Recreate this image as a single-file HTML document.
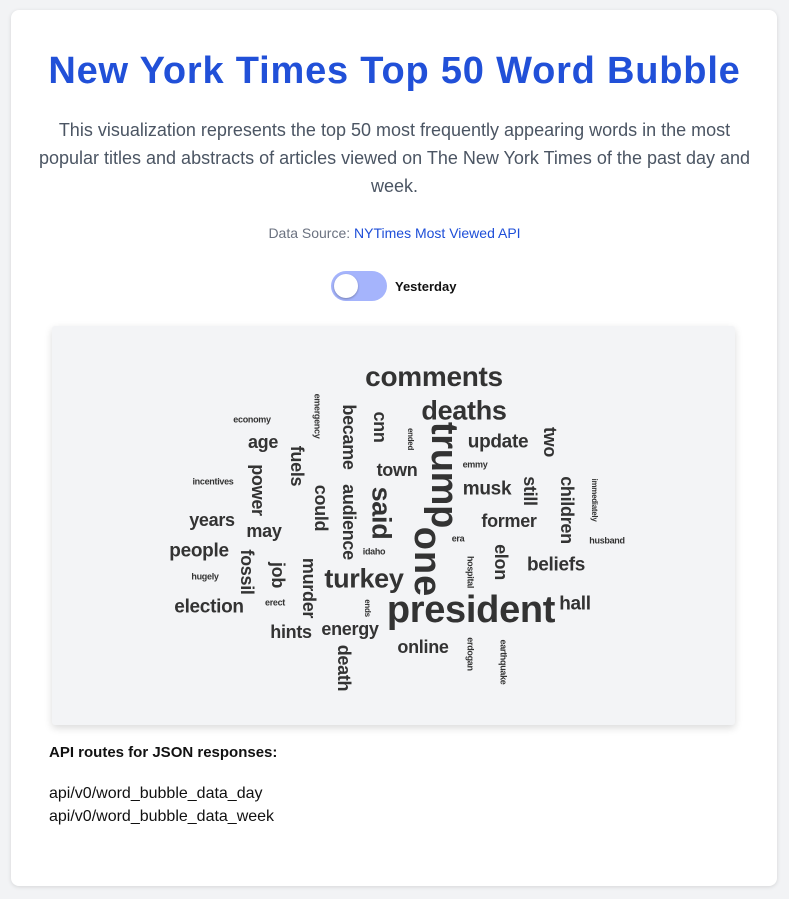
<!DOCTYPE html>
<html><head><meta charset="utf-8"><style>
body{margin:0;background:#f2f3f5;font-family:"Liberation Sans",sans-serif;width:789px;height:899px;overflow:hidden}
.card{position:absolute;left:11px;top:10px;width:766px;height:876px;background:#fff;border-radius:8px;box-shadow:0 1px 4px rgba(0,0,0,.12)}
h1{position:absolute;left:0;width:789px;top:50px;margin:0;text-align:center;color:#2150d8;font-size:38px;font-weight:900;letter-spacing:0.8px}
.desc{position:absolute;left:34px;width:721px;top:116px;text-align:center;color:#4b5563;font-size:18px;line-height:28px}
.src{position:absolute;left:0;width:789px;top:225px;text-align:center;color:#6b7280;font-size:14px}
.src a{color:#1d4ed8;text-decoration:none}
.tog{position:absolute;left:331px;top:271px;width:56px;height:30px;border-radius:15px;background:#a5b4fc}
.tog:after{content:"";position:absolute;left:3px;top:3px;width:24px;height:24px;border-radius:50%;background:#fff;box-shadow:0 1px 2px rgba(0,0,0,.3)}
.tl{position:absolute;left:395px;top:279px;font-size:13px;font-weight:bold;color:#111}
.cloud{position:absolute;left:52px;top:326px;width:683px;height:399px;background:#f3f4f6;box-shadow:0 3px 8px rgba(0,0,0,.15);border-radius:3px}
.w{position:absolute;transform:translate(-50%,-50%);font-weight:bold;color:#333;white-space:nowrap;line-height:1;letter-spacing:-0.3px}
.v{transform:translate(-50%,-50%) rotate(90deg)}
.api{position:absolute;left:49px;font-size:16px;color:#111}
</style></head><body>
<div class="card"></div>
<h1>New York Times Top 50 Word Bubble</h1>
<div class="desc">This visualization represents the top 50 most frequently appearing words in the most popular titles and abstracts of articles viewed on The New York Times of the past day and week.</div>
<div class="src">Data Source: <a>NYTimes Most Viewed API</a></div>
<div class="tog"></div><div class="tl">Yesterday</div>
<div class="cloud"></div>
<div style="position:absolute;left:0;top:0">
<div class="w" style="left:434px;top:377px;font-size:28px">comments</div>
<div class="w" style="left:464px;top:411px;font-size:27px">deaths</div>
<div class="w" style="left:498px;top:442px;font-size:19px">update</div>
<div class="w" style="left:397px;top:470px;font-size:18px">town</div>
<div class="w" style="left:475px;top:465px;font-size:9px">emmy</div>
<div class="w" style="left:487px;top:489px;font-size:19px">musk</div>
<div class="w" style="left:509px;top:521px;font-size:18px">former</div>
<div class="w" style="left:252px;top:420px;font-size:9px">economy</div>
<div class="w" style="left:263px;top:442px;font-size:18px">age</div>
<div class="w" style="left:213px;top:482px;font-size:9px">incentives</div>
<div class="w" style="left:212px;top:520px;font-size:18px">years</div>
<div class="w" style="left:264px;top:531px;font-size:18px">may</div>
<div class="w" style="left:199px;top:551px;font-size:19px">people</div>
<div class="w" style="left:374px;top:552px;font-size:9px">idaho</div>
<div class="w" style="left:458px;top:539px;font-size:9px">era</div>
<div class="w" style="left:607px;top:541px;font-size:9px">husband</div>
<div class="w" style="left:556px;top:565px;font-size:19px">beliefs</div>
<div class="w" style="left:205px;top:577px;font-size:9px">hugely</div>
<div class="w" style="left:364px;top:579px;font-size:27px">turkey</div>
<div class="w" style="left:275px;top:603px;font-size:9px">erect</div>
<div class="w" style="left:209px;top:607px;font-size:19px">election</div>
<div class="w" style="left:471px;top:610px;font-size:38px">president</div>
<div class="w" style="left:575px;top:604px;font-size:19px">hall</div>
<div class="w" style="left:291px;top:632px;font-size:18px">hints</div>
<div class="w" style="left:350px;top:629px;font-size:18px">energy</div>
<div class="w" style="left:423px;top:647px;font-size:18px">online</div>

<div class="w v" style="left:317px;top:416px;font-size:9px">emergency</div>
<div class="w v" style="left:349px;top:437px;font-size:18px">became</div>
<div class="w v" style="left:349px;top:522px;font-size:18px">audience</div>
<div class="w v" style="left:380px;top:427px;font-size:18px">cnn</div>
<div class="w v" style="left:410px;top:439px;font-size:8px">ended</div>
<div class="w v" style="left:444px;top:475px;font-size:38px">trump</div>
<div class="w v" style="left:427px;top:562px;font-size:38px;letter-spacing:1px">one</div>
<div class="w v" style="left:550px;top:442px;font-size:18px">two</div>
<div class="w v" style="left:297px;top:466px;font-size:18px">fuels</div>
<div class="w v" style="left:258px;top:490px;font-size:18px">power</div>
<div class="w v" style="left:321px;top:508px;font-size:18px">could</div>
<div class="w v" style="left:381px;top:513px;font-size:27px">said</div>
<div class="w v" style="left:530px;top:491px;font-size:18px">still</div>
<div class="w v" style="left:567px;top:510px;font-size:18px">children</div>
<div class="w v" style="left:594px;top:500px;font-size:8px">immediately</div>
<div class="w v" style="left:247px;top:572px;font-size:18px">fossil</div>
<div class="w v" style="left:278px;top:575px;font-size:18px">job</div>
<div class="w v" style="left:309px;top:588px;font-size:18px">murder</div>
<div class="w v" style="left:501px;top:562px;font-size:18px">elon</div>
<div class="w v" style="left:470px;top:572px;font-size:9px">hospital</div>
<div class="w v" style="left:367px;top:608px;font-size:8px">ends</div>
<div class="w v" style="left:344px;top:668px;font-size:18px">death</div>
<div class="w v" style="left:470px;top:654px;font-size:9px">erdogan</div>
<div class="w v" style="left:503px;top:662px;font-size:9px">earthquake</div>
</div>
<div class="api" style="top:744px;font-size:15px;font-weight:bold">API routes for JSON responses:</div>
<div class="api" style="top:785px">api/v0/word_bubble_data_day</div>
<div class="api" style="top:808px">api/v0/word_bubble_data_week</div>
</body></html>
